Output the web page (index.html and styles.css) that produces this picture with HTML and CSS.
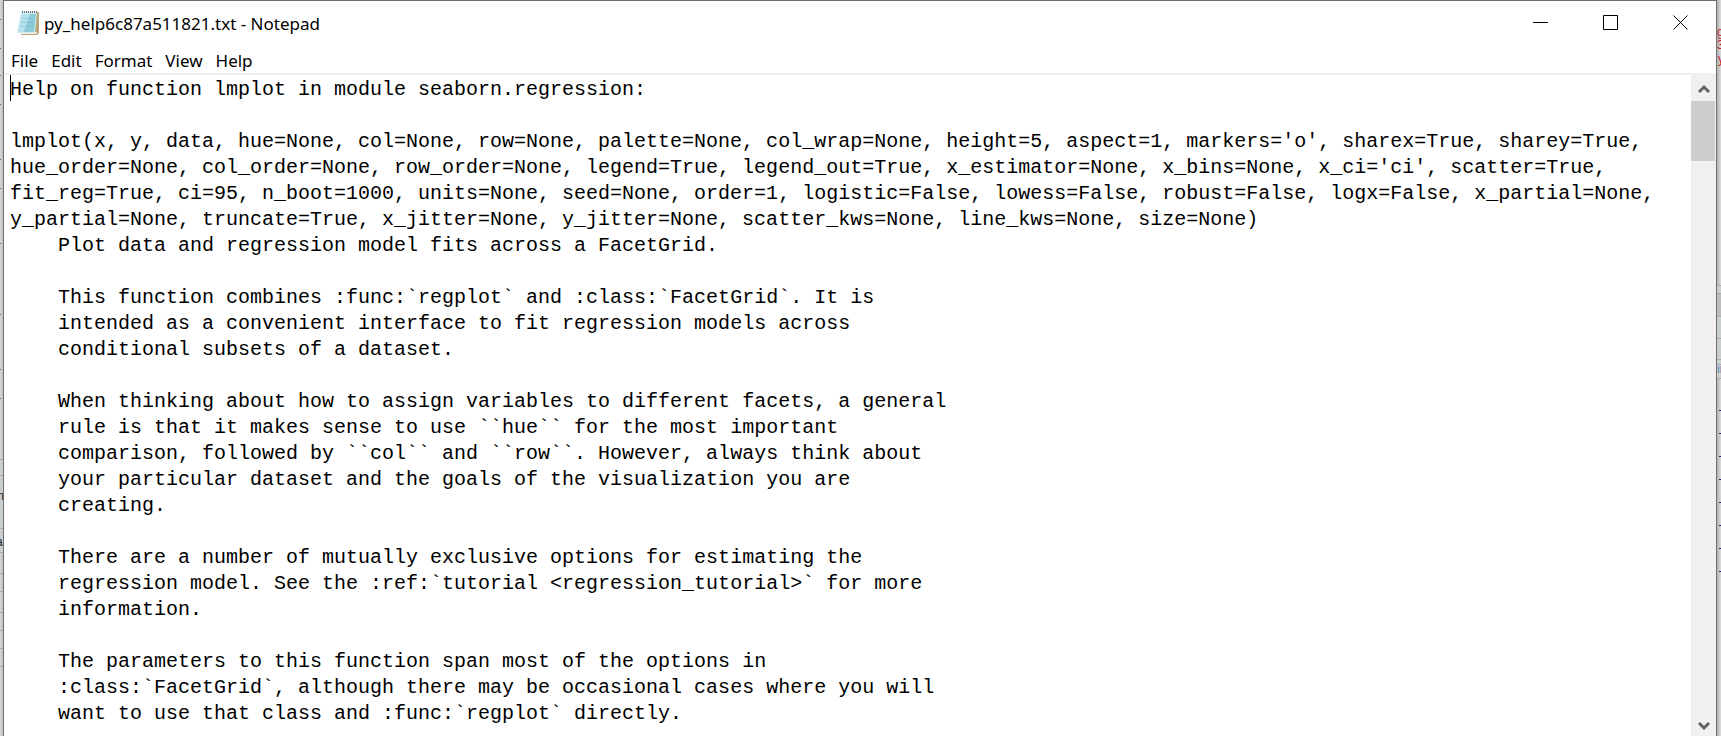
FILE: index.html
```html
<!DOCTYPE html>
<html lang="en">
<head>
<meta charset="utf-8">
<title>py_help6c87a511821.txt - Notepad</title>
<link rel="stylesheet" href="styles.css">
</head>
<body>
<div class="desktop">
<svg class="edge" viewBox="0 0 3 736" preserveAspectRatio="xMinYMin slice" aria-hidden="true">
<path class="tick" d="M0 19.500h1M0 48.500h1M0 75.500h1M0 104.500h1M0 159.500h1M0 188.500h1M0 243.500h1M0 314.500h1M0 369.500h1M0 398.500h1"/>
<path class="pane" d="M0 460h3v92H0z"/>
<path class="rule" d="M0 459.500h3M0 475.500h3M0 528.500h3M0 552.500h3M0 573.500h3M0 591.500h3M0 612.500h3M0 630.500h3M0 648.500h3M0 666.500h3"/>
<text class="scrap" x="-6" y="500">m</text><text class="scrap" x="-4" y="546">a</text>
</svg>
<main class="window">
<header class="titlebar">
<svg class="logo" viewBox="0 0 24 26" aria-hidden="true">
<path fill="#b9a67c" d="M6 2h17v21l-2 2H5z"/>
<path fill="#f4f1e4" d="M5 22h16l-1 2H4z"/>
<path fill="#d3eef3" d="M5 2h16l-2 21H1z"/>
<path fill="#8ccbd9" d="M6 4h14l-2 18H3z"/>
<path fill="#b4e2ea" d="M6 4h8L8 22H2z"/>
<path stroke="#78bccb" stroke-opacity=".5" d="M6 8.500h13M5 12.500h14M4 16.500h14"/>
<path stroke="#64707a" stroke-dasharray="1 1" stroke-width="2" d="M6 2h15"/>
</svg>
<h1 class="title">py_help6c87a511821.txt - Notepad</h1>
<button class="caption" aria-label="Minimize"><svg viewBox="0 0 16 16"><path d="M0 7.500h15"/></svg></button>
<button class="caption" aria-label="Maximize"><svg viewBox="0 0 16 16"><path d="M.5 .5h14v14H.5z"/></svg></button>
<button class="caption" aria-label="Close"><svg viewBox="0 0 16 16"><path d="M.5 .5l14 14M14.500 .5l-14 14"/></svg></button>
</header>
<nav class="menu">
<button>File</button><button>Edit</button><button>Format</button><button>View</button><button>Help</button>
</nav>
<section class="editor">
<textarea class="text" aria-label="Text editor" spellcheck="false">Help on function lmplot in module seaborn.regression:

lmplot(x, y, data, hue=None, col=None, row=None, palette=None, col_wrap=None, height=5, aspect=1, markers='o', sharex=True, sharey=True, hue_order=None, col_order=None, row_order=None, legend=True, legend_out=True, x_estimator=None, x_bins=None, x_ci='ci', scatter=True, fit_reg=True, ci=95, n_boot=1000, units=None, seed=None, order=1, logistic=False, lowess=False, robust=False, logx=False, x_partial=None, y_partial=None, truncate=True, x_jitter=None, y_jitter=None, scatter_kws=None, line_kws=None, size=None)
    Plot data and regression model fits across a FacetGrid.

    This function combines :func:`regplot` and :class:`FacetGrid`. It is
    intended as a convenient interface to fit regression models across
    conditional subsets of a dataset.

    When thinking about how to assign variables to different facets, a general
    rule is that it makes sense to use ``hue`` for the most important
    comparison, followed by ``col`` and ``row``. However, always think about
    your particular dataset and the goals of the visualization you are
    creating.

    There are a number of mutually exclusive options for estimating the
    regression model. See the :ref:`tutorial &lt;regression_tutorial&gt;` for more
    information.

    The parameters to this function span most of the options in
    :class:`FacetGrid`, although there may be occasional cases where you will
    want to use that class and :func:`regplot` directly.</textarea>
<span class="caret"></span>
<div class="scrollbar">
<button class="arrow" aria-label="Scroll up"><svg viewBox="0 0 12 10"><path d="M1 8l5-5 5 5"/></svg></button>
<div class="thumb"></div>
<button class="arrow arrow-down" aria-label="Scroll down"><svg viewBox="0 0 12 10"><path d="M1 2l5 5 5-5"/></svg></button>
</div>
</section>
</main>
<svg class="edge edge-right" viewBox="0 0 4 736" preserveAspectRatio="xMinYMin slice" aria-hidden="true">
<path class="pane" d="M0 285h4v93H0z"/><path fill="#bcbcbc" d="M0 293h4v23H0z"/>
<path class="rule" d="M0 285.500h4M0 293.500h4M0 316.500h4M0 338.500h4M0 359.500h4M0 378.500h4"/>
<path class="mark" d="M2 410.500h2M2 433.500h2M2 456.500h2M2 479.500h2M2 502.500h2M2 525.500h2M2 548.500h2M2 571.500h2"/>
<text class="scrap error" x="0" y="36">g</text><text class="scrap error" x="0" y="49">3</text><text class="scrap error" x="1" y="63">y</text>
<text class="scrap link" x="0" y="373">ii</text>
</svg>
</div>
</body>
</html>
```
FILE: styles.css
```css
* { box-sizing: border-box; }
body { margin: 0; background: #d2d2d2; color: #000; font-family: "Noto Sans", sans-serif; }
button { margin: 0; padding: 0; border: 0; background: none; color: inherit; font: inherit; }
.desktop { display: flex; height: 100vh; overflow: hidden; }
.edge { flex: none; width: 3px; height: 736px; background: linear-gradient(to right, #d8d8d8, #bfbfbf); }
.edge-right { width: 4px; background: linear-gradient(to right, #b0b0b0, #dcdcdc); }
.tick { stroke: #666; }
.pane { fill: #c9cecf; }
.rule { stroke: #aaacac; }
.mark { stroke: #23236e; }
.scrap { font: 12px "Liberation Sans", sans-serif; fill: #222; }
.error { fill: #c3202c; }
.link { fill: #5b86b5; }
.window { flex: 1; min-width: 0; display: flex; flex-direction: column; background: #fff; border: 1px solid #6e6e6e; border-bottom: 0; }
.titlebar { display: flex; align-items: center; height: 44px; padding-left: 12px; }
.logo { width: 24px; height: 26px; margin-right: 4px; }
.title { flex: 1; margin: 0; padding-top: 1px; font-size: 17px; line-height: 24px; font-weight: 400; }
.caption { display: grid; place-items: center; width: 70px; height: 44px; }
.caption svg { width: 16px; height: 16px; fill: none; stroke: #000; }
.menu { display: flex; gap: 13px; height: 30px; padding: 4px 7px; border-bottom: 2px solid #f0f0f0; font-size: 17px; line-height: 24px; }
.editor { position: relative; flex: 1; min-height: 0; display: flex; }
.text { flex: 1; min-width: 0; margin: 0; padding: 2px 6px 0; border: 0; outline: 0; resize: none; overflow: hidden; background: #fff; color: #000; font: 20px/26px "Liberation Mono", monospace; }
.caret { position: absolute; left: 6px; top: 0; width: 1px; height: 26px; background: #000; }
.scrollbar { display: flex; flex-direction: column; width: 25px; background: #f0f0f0; }
.arrow { display: grid; place-items: center; height: 28px; margin-bottom: -2px; }
.arrow svg { width: 12px; height: 10px; fill: none; stroke: #606060; stroke-width: 3; }
.arrow-down { height: 20px; margin: auto 0 0; }
.thumb { height: 60px; margin-right: 1px; background: #cdcdcd; }
```
